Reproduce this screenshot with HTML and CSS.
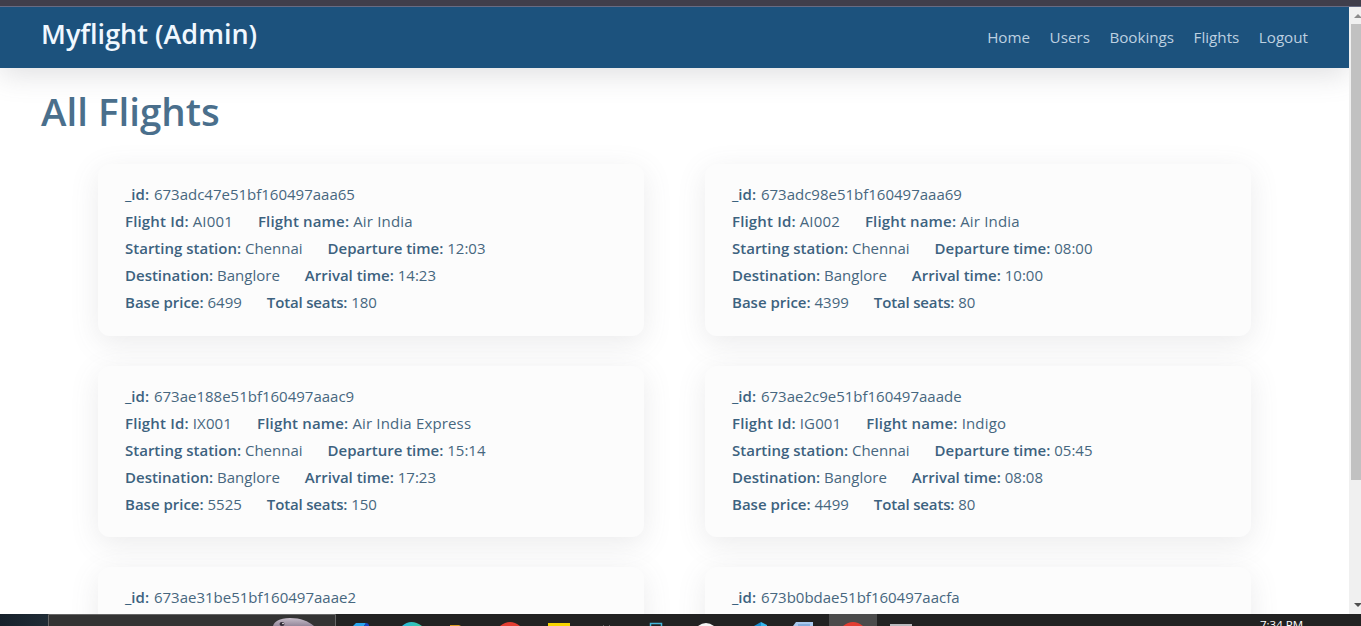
FILE: index.html
```html
<!DOCTYPE html>
<html lang="en">
<head>
<meta charset="utf-8">
<title>Myflight (Admin)</title>
<link rel="stylesheet" href="styles.css">
</head>
<body>
<div class="window-edge"></div>
<div class="viewport">
  <div class="page">
    <nav class="navbar">
      <h3 class="brand">Myflight (Admin)</h3>
      <ul class="nav-links"><li>Home</li><li>Users</li><li>Bookings</li><li>Flights</li><li>Logout</li></ul>
    </nav>
    <h1 class="title">All Flights</h1>
    <main class="flights">
      <article class="card">
        <p class="row record"><span><b>_id:</b> 673adc47e51bf160497aaa65</span></p>
        <p class="row flight"><span><b>Flight Id:</b> AI001</span><span><b>Flight name:</b> Air India</span></p>
        <p class="row"><span><b>Starting station:</b> Chennai</span><span><b>Departure time:</b> 12:03</span></p>
        <p class="row"><span><b>Destination:</b> Banglore</span><span><b>Arrival time:</b> 14:23</span></p>
        <p class="row"><span><b>Base price:</b> 6499</span><span class="seats"><b>Total seats:</b> 180</span></p>
      </article>
      <article class="card">
        <p class="row record"><span><b>_id:</b> 673adc98e51bf160497aaa69</span></p>
        <p class="row flight"><span><b>Flight Id:</b> AI002</span><span><b>Flight name:</b> Air India</span></p>
        <p class="row"><span><b>Starting station:</b> Chennai</span><span><b>Departure time:</b> 08:00</span></p>
        <p class="row"><span><b>Destination:</b> Banglore</span><span><b>Arrival time:</b> 10:00</span></p>
        <p class="row"><span><b>Base price:</b> 4399</span><span class="seats"><b>Total seats:</b> 80</span></p>
      </article>
      <article class="card">
        <p class="row record"><span><b>_id:</b> 673ae188e51bf160497aaac9</span></p>
        <p class="row flight"><span><b>Flight Id:</b> IX001</span><span><b>Flight name:</b> Air India Express</span></p>
        <p class="row"><span><b>Starting station:</b> Chennai</span><span><b>Departure time:</b> 15:14</span></p>
        <p class="row"><span><b>Destination:</b> Banglore</span><span><b>Arrival time:</b> 17:23</span></p>
        <p class="row"><span><b>Base price:</b> 5525</span><span class="seats"><b>Total seats:</b> 150</span></p>
      </article>
      <article class="card">
        <p class="row record"><span><b>_id:</b> 673ae2c9e51bf160497aaade</span></p>
        <p class="row flight"><span><b>Flight Id:</b> IG001</span><span><b>Flight name:</b> Indigo</span></p>
        <p class="row"><span><b>Starting station:</b> Chennai</span><span><b>Departure time:</b> 05:45</span></p>
        <p class="row"><span><b>Destination:</b> Banglore</span><span><b>Arrival time:</b> 08:08</span></p>
        <p class="row"><span><b>Base price:</b> 4499</span><span class="seats"><b>Total seats:</b> 80</span></p>
      </article>
      <article class="card">
        <p class="row record"><span><b>_id:</b> 673ae31be51bf160497aaae2</span></p>
      </article>
      <article class="card">
        <p class="row record"><span><b>_id:</b> 673b0bdae51bf160497aacfa</span></p>
      </article>
    </main>
  </div>
  <div class="scrollbar">
    <svg class="arrow" width="12" height="17" viewBox="0 0 12 17"><path d="M5 11h8L9 7z" fill="#8b8b8b"/></svg>
    <div class="thumb"></div>
    <svg class="arrow arrow-down" width="12" height="17" viewBox="0 0 12 17"><path d="M5 6h8L9 10z" fill="#505050"/></svg>
  </div>
</div>
<footer class="taskbar">
  <svg class="task-icons" width="1361" height="12" viewBox="0 0 1361 12">
    <defs>
      <linearGradient id="fish" x2="0" y2="1"><stop stop-color="#c6bdc9"/><stop offset="1" stop-color="#94879a"/></linearGradient>
      <linearGradient id="teal"><stop stop-color="#27b9e0"/><stop offset="1" stop-color="#3ac9a0"/></linearGradient>
      <linearGradient id="start"><stop stop-color="#16202b"/><stop offset="1" stop-color="#202c36"/></linearGradient>
    </defs>
    <rect width="48" height="12" fill="url(#start)"/>
    <path d="M48.500 12V.5h287V12" fill="#333" stroke="#666"/>
    <path d="M273 12C274 8 279 4 290 4s18 3 24 8z" fill="url(#fish)"/>
    <ellipse cx="282" cy="10" rx="2.500" ry="2" fill="#332d38"/><circle cx="283" cy="9.500" r=".8" fill="#fff"/>
    <path d="M353 12l3-3h10l-2 3z" fill="#27a5ee"/><path d="M364 12l2-3q3 0 3 3z" fill="#1746c5"/>
    <path d="M402 12q9-8 20 0z" fill="url(#teal)"/>
    <path d="M450 12v-1h9l2 1z" fill="#d99a20"/>
    <path d="M500 12q10-8 20 0z" fill="#e33d31"/>
    <path d="M548 9h22v3h-22z" fill="#f6d400"/>
    <path d="M603 12l1-1m5 1l1-1" stroke="#666"/>
    <path d="M650.500 12V9.500h11V12" fill="none" stroke="#42b5d8" stroke-width="1.500"/>
    <path d="M698 12q8-6 16 0z" fill="#f5f5f5"/>
    <path d="M754 12l7-4v4z" fill="#168dd1"/><path d="M761 8l6 3v1h-6z" fill="#35b7ed"/>
    <path d="M793 12l3-4h17v4z" fill="#a9c9ee"/><path d="M798 11h12" stroke="#5d8ec7"/>
    <path d="M829 0h48v12h-48z" fill="#4b4b4b"/>
    <path d="M843 12q10-8 20 0z" fill="#e33d31"/>
    <path d="M890 10h22v2h-22z" fill="#b9b9bd"/>
  </svg>
  <span class="clock">7:34 PM</span>
</footer>
</body>
</html>
```
FILE: styles.css
```css
* { box-sizing: border-box; }
body {
  margin: 0;
  height: 626px;
  overflow: hidden;
  display: flex;
  flex-direction: column;
  background: #fff;
  font-family: "Open Sans", "Noto Sans", sans-serif;
}
.window-edge { height: 7px; flex: none; background: #403e4b; border-bottom: 1px solid #676b83; }
.viewport { height: 607px; flex: none; display: flex; overflow: hidden; }
.page { width: 1349px; overflow: hidden; }
.navbar {
  height: 61px;
  padding: 0 41px;
  display: flex;
  justify-content: space-between;
  background: #1c527d;
  box-shadow: 0 7px 29px rgba(100, 100, 111, .2);
}
.brand { margin: 7px 0 0; font-size: 27px; font-weight: 600; line-height: 40px; color: #f0f8ff; }
.nav-links {
  margin: 18px 0 0;
  padding: 0;
  display: flex;
  gap: 19.5px;
  list-style: none;
  font-size: 15.2px;
  line-height: 24px;
  color: #bdd0e0;
}
.title { margin: 19px 0 0 41px; font-size: 38.500px; font-weight: 600; line-height: 48px; color: #4a6f8c; }
.flights {
  padding: 29px 98px 0;
  display: grid;
  grid-template-columns: 546px 546px;
  column-gap: 61px;
  row-gap: 30px;
}
.card {
  height: 171.6px;
  padding: 17px 27px;
  border-radius: 12px;
  background: #fcfcfc;
  box-shadow: 0 7px 29px rgba(100, 100, 111, .13);
}
.row { margin: 0; display: flex; gap: 25px; font-size: 15px; line-height: 27px; color: #47677f; white-space: nowrap; }
.row b { font-weight: 600; color: #3c627f; }
.record b { margin-right: 1px; }
.flight { letter-spacing: .16px; }
.seats b { letter-spacing: -.16px; }
.scrollbar { width: 12px; display: flex; flex-direction: column; background: #f0f0f0; overflow: hidden; }
.arrow { flex: none; display: block; }
.thumb { height: 456px; flex: none; margin-left: 2px; background: #c1c1c1; }
.arrow-down { margin-top: auto; }
.taskbar { position: relative; height: 12px; flex: none; overflow: hidden; background: #222; }
.task-icons { display: block; }
.clock { position: absolute; left: 1260px; top: 3px; font-size: 11.500px; line-height: 16px; color: #fff; white-space: nowrap; }
```
